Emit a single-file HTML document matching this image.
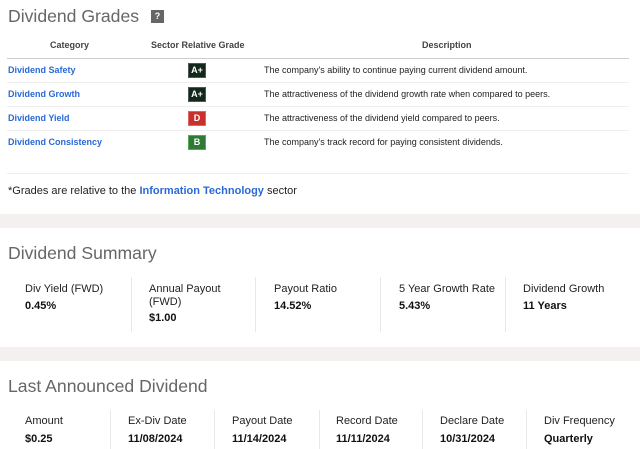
<!DOCTYPE html>
<html><head><meta charset="utf-8"><style>
*{margin:0;padding:0;box-sizing:border-box}
body{width:640px;height:449px;overflow:hidden;background:#fff;font-family:"Liberation Sans",Arial,sans-serif;position:relative;color:#222}
.a{position:absolute;white-space:nowrap}
.h1{font-size:17.6px;color:#666;line-height:24px}
.th{font-size:9px;font-weight:bold;color:#444}
.cat{font-size:9px;font-weight:bold;color:#2a6ad6}
.desc{font-size:9px;color:#222}
.badge{position:absolute;left:188px;width:18px;height:15px;color:#fff;font-size:9px;font-weight:bold;text-align:center;line-height:13px;border:1px solid #555}
.hl{position:absolute;left:7px;width:622px;height:1px;background:#eee}
.band{position:absolute;left:0;width:640px;height:14px;background:#f4f0ef}
.lb{font-size:11px;color:#222;line-height:13px}
.v{font-size:11px;font-weight:bold;color:#111}
.vd{position:absolute;width:1px;background:#e8e8e8}
</style></head><body>
<div class="a h1" style="left:8px;top:4px">Dividend Grades</div>
<div class="a" style="left:151px;top:10px;width:13px;height:13px;background:#666;color:#fff;font-size:9px;font-weight:bold;text-align:center;line-height:13px">?</div>
<div class="a th" style="left:50px;top:40px">Category</div>
<div class="a th" style="left:151px;top:40px">Sector Relative Grade</div>
<div class="a th" style="left:422px;top:40px">Description</div>
<div class="hl" style="top:58px;background:#ccc"></div>
<div class="a cat" style="left:8px;top:65px">Dividend Safety</div>
<div class="badge" style="top:63px;background:#12281a">A+</div>
<div class="a desc" style="left:264px;top:65px">The company's ability to continue paying current dividend amount.</div>
<div class="hl" style="top:82px"></div>
<div class="a cat" style="left:8px;top:89px">Dividend Growth</div>
<div class="badge" style="top:87px;background:#12281a">A+</div>
<div class="a desc" style="left:264px;top:89px">The attractiveness of the dividend growth rate when compared to peers.</div>
<div class="hl" style="top:106px"></div>
<div class="a cat" style="left:8px;top:113px">Dividend Yield</div>
<div class="badge" style="top:111px;background:#c9302c;border-color:#d66">D</div>
<div class="a desc" style="left:264px;top:113px">The attractiveness of the dividend yield compared to peers.</div>
<div class="hl" style="top:130px"></div>
<div class="a cat" style="left:8px;top:137px">Dividend Consistency</div>
<div class="badge" style="top:135px;background:#2e7a36;border-color:#5a5">B</div>
<div class="a desc" style="left:264px;top:137px">The company's track record for paying consistent dividends.</div>
<div class="hl" style="top:173px"></div>
<div class="a" style="left:8px;top:185px;font-size:11px">*Grades are relative to the <b style="color:#2a6ad6">Information Technology</b> sector</div>
<div class="band" style="top:214px"></div>
<div class="a h1" style="left:8px;top:241px">Dividend Summary</div>
<div class="vd" style="left:131px;top:277px;height:55px"></div>
<div class="vd" style="left:255px;top:277px;height:55px"></div>
<div class="vd" style="left:380px;top:277px;height:55px"></div>
<div class="vd" style="left:505px;top:277px;height:55px"></div>
<div class="a lb" style="left:25px;top:283px">Div Yield (FWD)</div>
<div class="a v" style="left:25px;top:300px">0.45%</div>
<div class="a lb" style="left:149px;top:283px">Annual Payout<br>(FWD)</div>
<div class="a v" style="left:149px;top:312px">$1.00</div>
<div class="a lb" style="left:274px;top:283px">Payout Ratio</div>
<div class="a v" style="left:274px;top:300px">14.52%</div>
<div class="a lb" style="left:399px;top:283px">5 Year Growth Rate</div>
<div class="a v" style="left:399px;top:300px">5.43%</div>
<div class="a lb" style="left:523px;top:283px">Dividend Growth</div>
<div class="a v" style="left:523px;top:300px">11 Years</div>
<div class="band" style="top:347px"></div>
<div class="a h1" style="left:8px;top:374px">Last Announced Dividend</div>
<div class="vd" style="left:110px;top:410px;height:39px"></div>
<div class="vd" style="left:214px;top:410px;height:39px"></div>
<div class="vd" style="left:319px;top:410px;height:39px"></div>
<div class="vd" style="left:422px;top:410px;height:39px"></div>
<div class="vd" style="left:526px;top:410px;height:39px"></div>
<div class="a lb" style="left:25px;top:415px">Amount</div>
<div class="a v" style="left:25px;top:433px">$0.25</div>
<div class="a lb" style="left:128px;top:415px">Ex-Div Date</div>
<div class="a v" style="left:128px;top:433px">11/08/2024</div>
<div class="a lb" style="left:232px;top:415px">Payout Date</div>
<div class="a v" style="left:232px;top:433px">11/14/2024</div>
<div class="a lb" style="left:336px;top:415px">Record Date</div>
<div class="a v" style="left:336px;top:433px">11/11/2024</div>
<div class="a lb" style="left:440px;top:415px">Declare Date</div>
<div class="a v" style="left:440px;top:433px">10/31/2024</div>
<div class="a lb" style="left:544px;top:415px">Div Frequency</div>
<div class="a v" style="left:544px;top:433px">Quarterly</div>
</body></html>
